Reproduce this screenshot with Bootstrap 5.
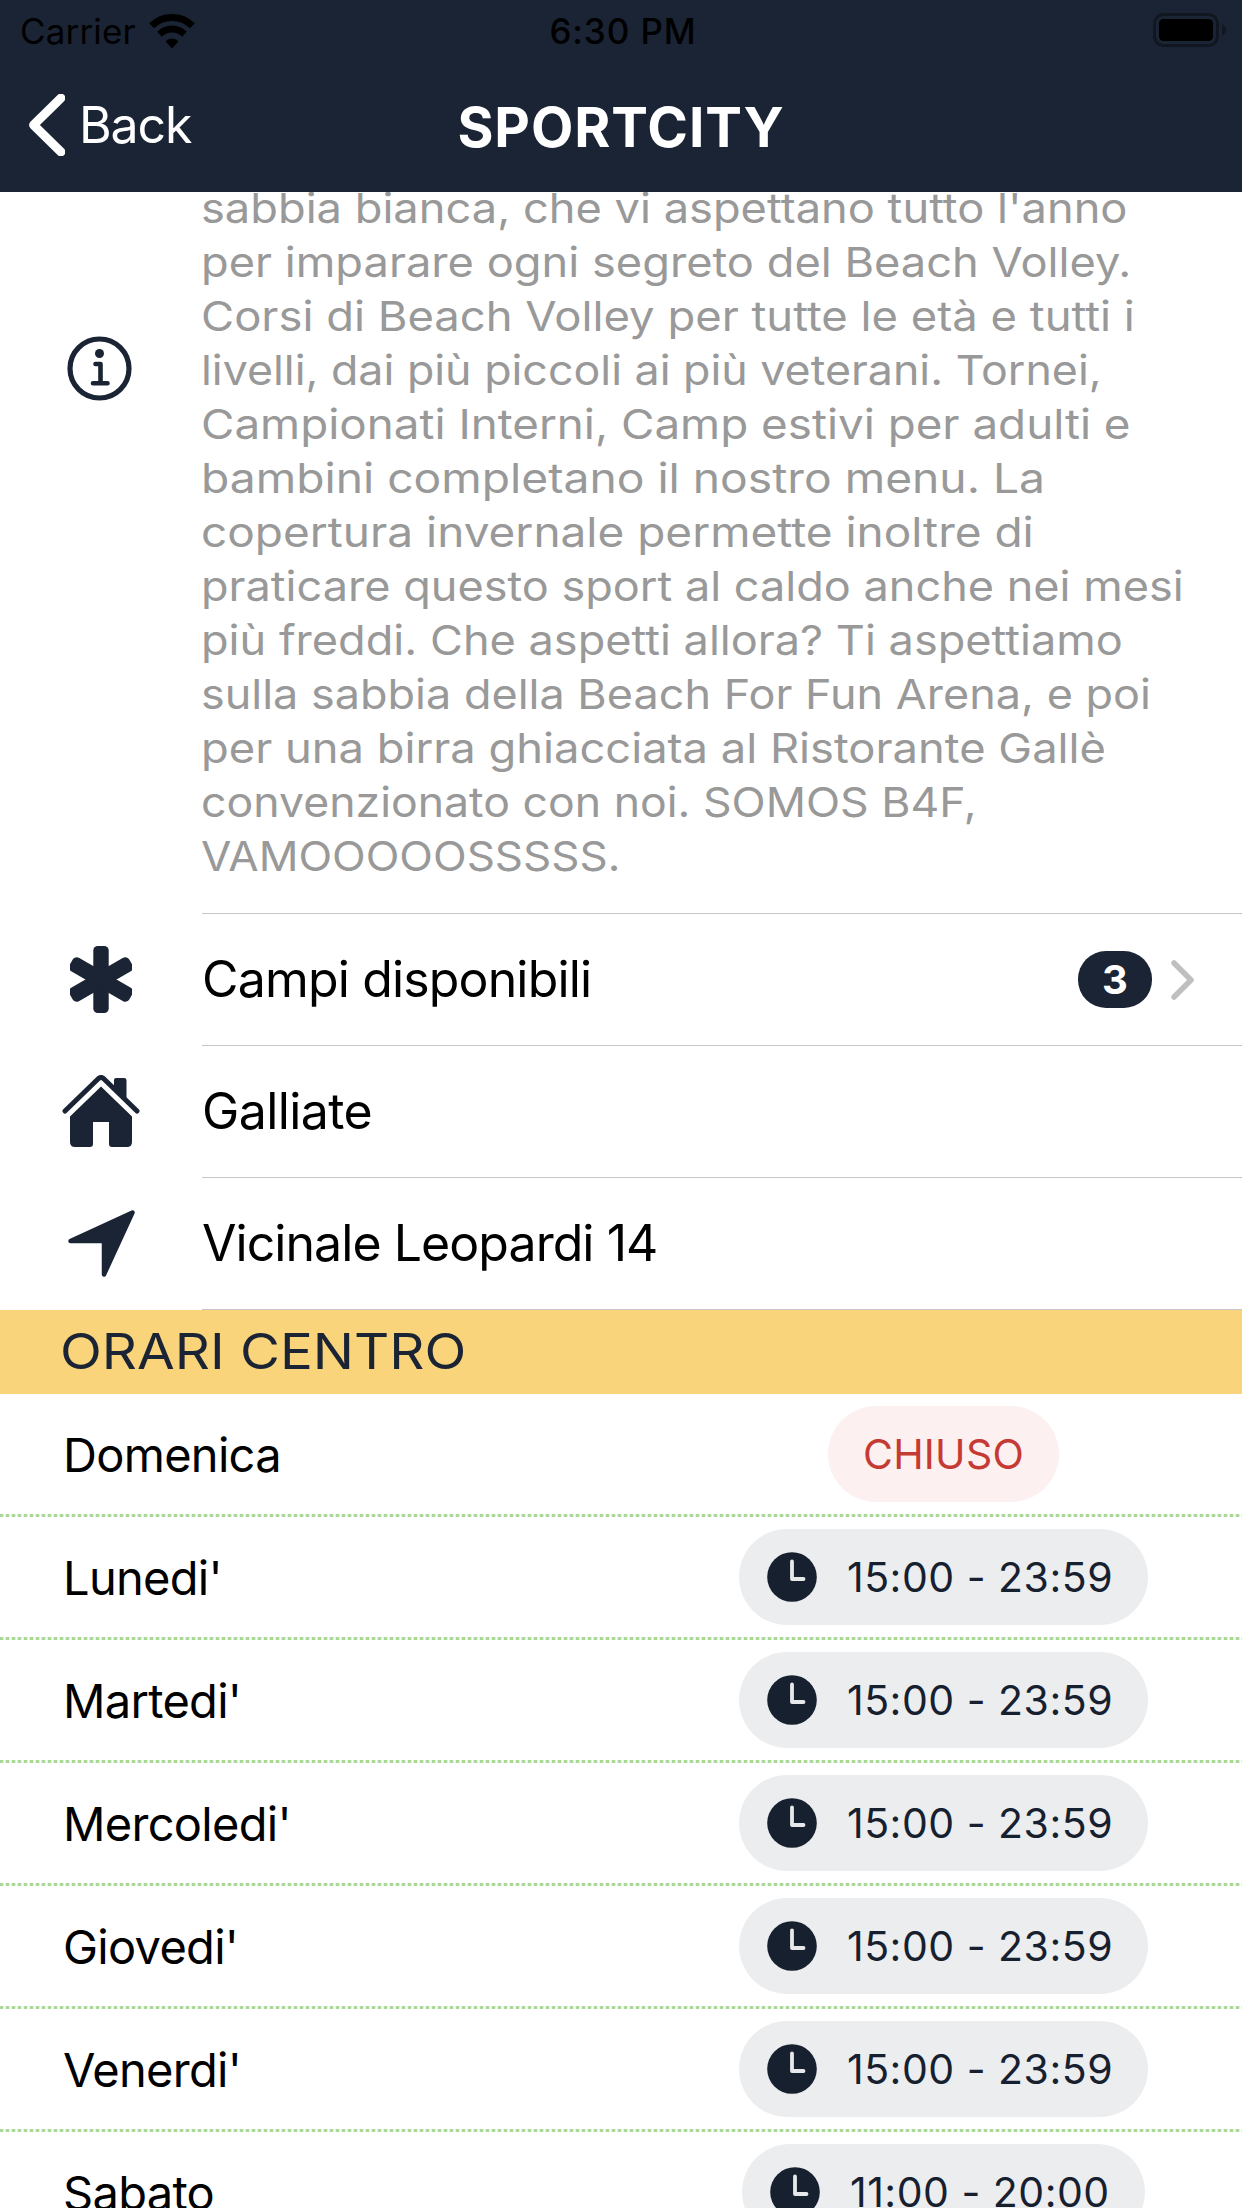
<!DOCTYPE html>
<html lang="it">
<head>
<meta charset="utf-8">
<meta name="viewport" content="width=device-width, initial-scale=1">
<title>SPORTCITY</title>
<link href="https://cdn.jsdelivr.net/npm/bootstrap@5.3.0/dist/css/bootstrap.min.css" rel="stylesheet">
<style>
:root { --ink: #1b2434; }
body { font-family: Inter, "Liberation Sans", sans-serif; color: #000; background: #fff; line-height: 1.2; }
.screen { width: 1242px; height: 2208px; }
.topbar { background: var(--ink); height: 192px; z-index: 2; }
.statusbar { height: 62px; font-size: 35px; padding: 0 16px 0 20px; color: #000; }
.carrier { width: 129px; letter-spacing: .16px; }
.clock-time { font-weight: 500; letter-spacing: .9px; }
.side { flex: 1 1 0; }
.titlebar { height: 130px; padding: 0 29px; }
.back-link { color: #fff; font-size: 50px; letter-spacing: -1.12px; gap: 14px; padding-bottom: 4px; }
.screen-title { font-size: 55px; font-weight: 700; letter-spacing: .95px; }
.icon-col { width: 202px; flex: none; color: var(--ink); }
.icon-col svg { display: block; }
.about { height: 722px; }
.about .icon-col { padding: 144px 0 0 67px; }
.about-text { margin-top: -11px; height: 733px; font-size: 41px; line-height: 54px; color: #999; border-bottom: 1px solid #c6c6c8; white-space: nowrap; }
/* Widened letterforms, one factor per line */
.about-text span { display: block; width: fit-content; margin-left: -1px; transform-origin: left; transform: scaleX(var(--k)); }
.info-row { height: 132px; font-size: 50px; }
.info-row .icon-col { padding-bottom: 2px; }
.info-body { border-bottom: 1px solid #c6c6c8; }
.row-label { padding-bottom: 2px; }
.count-pill { background: var(--ink); width: 74px; height: 57px; border-radius: 28px; font-size: 40px; font-weight: 700; margin-right: 19px; }
.section-band { background: #f9d47b; height: 84px; padding: 1px 0 0 60px; font-size: 49px; font-weight: 400; color: var(--ink); }
.section-band span { transform-origin: left; transform: scaleX(1.116); }
.day-row { height: 123px; padding-bottom: 3px; background: repeating-linear-gradient(90deg, #a9d897 0 3px, #e4f3de 3px 4px, #fff 4px 5px, #e4f3de 5px 6px) bottom left / 100% 3px no-repeat; }
.day-name { width: 645px; padding: 2px 0 0 63px; font-size: 47px; letter-spacing: -.7px; }
.hours { height: 96px; border-radius: 48px; font-size: 41px; color: #17202f; background: #ecedef; letter-spacing: .5px; width: 409px; padding-left: 28px; gap: 30px; }
.hours b { font-weight: 400; padding-top: 2px; }
.hours.late { width: 403px; }
.hours.closed { width: 231px; padding: 0; background: #fcf0f0; color: #c63a34; letter-spacing: .25px; }
</style>
</head>
<body>
<svg width="0" height="0" class="d-none">
  <symbol id="clock" viewBox="0 0 50 50"><circle cx="25" cy="25" r="24.8" fill="#17202f"/><path d="M25 9.5V27H36.5" fill="none" stroke="#e7e8ea" stroke-width="3.8" stroke-linecap="round" stroke-linejoin="round"/></symbol>
</svg>
<div class="screen d-flex flex-column overflow-hidden">
  <header class="topbar position-relative flex-shrink-0">
    <div class="statusbar d-flex align-items-center">
      <div class="side d-flex align-items-center">
        <span class="carrier">Carrier</span>
        <svg width="46" height="42" viewBox="0 0 46 42"><g fill="none" stroke="#000" stroke-width="7"><path d="M2.6 15.8A29 29 0 0 1 43.4 15.8"/><path d="M10.6 24.2A17.6 17.6 0 0 1 35.4 24.2"/></g><path d="M23 38.5L16.5 31.2A9.3 9.3 0 0 1 29.5 31.2Z"/></svg>
      </div>
      <span class="clock-time">6:30 PM</span>
      <div class="side d-flex justify-content-end">
        <svg width="73" height="36" viewBox="0 0 73 36"><rect x="1.5" y="1.5" width="63" height="31" rx="9" fill="none" stroke="#111721" stroke-width="3"/><rect x="6" y="6" width="54" height="22" rx="4.5"/><path d="M69 11Q73 13.500 73 17T69 23Z" fill="#111721"/></svg>
      </div>
    </div>
    <nav class="titlebar d-flex align-items-center">
      <div class="side"><a href="#" class="back-link d-inline-flex align-items-center text-decoration-none">
        <svg width="36" height="62" viewBox="0 0 36 62"><path d="M32 4L4.500 31L32 58" fill="none" stroke="#fff" stroke-width="8.800" stroke-linecap="round" stroke-linejoin="round"/></svg>Back</a></div>
      <h1 class="screen-title text-white m-0">SPORTCITY</h1>
      <div class="side"></div>
    </nav>
  </header>

  <main>
    <section class="about d-flex">
      <div class="icon-col"><svg width="65" height="65" viewBox="0 0 65 65" fill="none" stroke="currentColor"><circle cx="32.500" cy="32.500" r="29.500" stroke-width="5.200"/><circle cx="32.500" cy="17.500" r="4.500" fill="currentColor" stroke="none"/><path d="M28.500 28H33.500V47.200M26 47.200H40.500" stroke-width="4.600" stroke-linecap="round" stroke-linejoin="round"/></svg></div>
      <div class="about-text flex-fill">
        <span style="--k:1.103">sabbia bianca, che vi aspettano tutto l'anno</span>
        <span style="--k:1.103">per imparare ogni segreto del Beach Volley.</span>
        <span style="--k:1.107">Corsi di Beach Volley per tutte le età e tutti i</span>
        <span style="--k:1.091">livelli, dai più piccoli ai più veterani. Tornei,</span>
        <span style="--k:1.116">Campionati Interni, Camp estivi per adulti e</span>
        <span style="--k:1.127">bambini completano il nostro menu. La</span>
        <span style="--k:1.121">copertura invernale permette inoltre di</span>
        <span style="--k:1.099">praticare questo sport al caldo anche nei mesi</span>
        <span style="--k:1.1">più freddi. Che aspetti allora? Ti aspettiamo</span>
        <span style="--k:1.097">sulla sabbia della Beach For Fun Arena, e poi</span>
        <span style="--k:1.105">per una birra ghiacciata al Ristorante Gallè</span>
        <span style="--k:1.088">convenzionato con noi. SOMOS B4F,</span>
        <span style="--k:1.073">VAMOOOOOSSSSS.</span>
      </div>
    </section>

    <div class="info-row d-flex">
      <div class="icon-col d-flex align-items-center justify-content-center"><svg width="62" height="67" viewBox="0 0 62 67"><g fill="currentColor"><rect x="23.300" y="0" width="15.400" height="67" rx="4.500"/><rect x="23.300" y="-1" width="15.400" height="69" rx="4.500" transform="rotate(60 31 33.500)"/><rect x="23.300" y="-1" width="15.400" height="69" rx="4.500" transform="rotate(-60 31 33.500)"/></g></svg></div>
      <div class="info-body flex-fill d-flex align-items-center">
        <span class="row-label me-auto" style="letter-spacing:-.84px">Campi disponibili</span>
        <span class="count-pill text-white d-flex align-items-center justify-content-center">3</span>
        <svg width="71" height="40" viewBox="0 0 71 40"><path d="M3 3L20 20L3 37" fill="none" stroke="#bfbfbf" stroke-width="5.500" stroke-linecap="round" stroke-linejoin="round"/></svg>
      </div>
    </div>
    <div class="info-row d-flex">
      <div class="icon-col d-flex align-items-center justify-content-center"><svg width="78" height="72" viewBox="0 0 78 72"><path d="M39 11.500L70 41.500V67Q70 72 65 72H50Q47 72 47 69V47H31V69Q31 72 28 72H13Q8 72 8 67V41.500Z" fill="currentColor"/><path d="M52 14V5Q52 3 54 3H62Q64.500 3 64.500 5V27Z" fill="currentColor"/><path d="M3 36L36.500 3.500Q39 1.500 41.500 3.500L75 36" fill="none" stroke="currentColor" stroke-width="5" stroke-linecap="round" stroke-linejoin="round"/></svg></div>
      <div class="info-body flex-fill d-flex align-items-center"><span class="row-label" style="letter-spacing:-.6px">Galliate</span></div>
    </div>
    <div class="info-row d-flex">
      <div class="icon-col d-flex align-items-center justify-content-center"><svg width="67" height="67" viewBox="0 0 67 67"><path d="M64.500 2.500L36 64.500V31H2.500Z" fill="currentColor" stroke="currentColor" stroke-width="4.500" stroke-linejoin="round"/></svg></div>
      <div class="info-body flex-fill d-flex align-items-center"><span class="row-label" style="letter-spacing:-.94px">Vicinale Leopardi 14</span></div>
    </div>

    <h2 class="section-band d-flex align-items-center m-0"><span>ORARI CENTRO</span></h2>

    <div class="day-row d-flex align-items-center"><span class="day-name">Domenica</span><div class="flex-fill d-flex justify-content-center"><span class="hours closed d-flex align-items-center justify-content-center"><b>CHIUSO</b></span></div></div>
    <div class="day-row d-flex align-items-center"><span class="day-name">Lunedi'</span><div class="flex-fill d-flex justify-content-center"><span class="hours d-flex align-items-center"><svg width="50" height="50"><use href="#clock"/></svg><b>15:00 - 23:59</b></span></div></div>
    <div class="day-row d-flex align-items-center"><span class="day-name">Martedi'</span><div class="flex-fill d-flex justify-content-center"><span class="hours d-flex align-items-center"><svg width="50" height="50"><use href="#clock"/></svg><b>15:00 - 23:59</b></span></div></div>
    <div class="day-row d-flex align-items-center"><span class="day-name">Mercoledi'</span><div class="flex-fill d-flex justify-content-center"><span class="hours d-flex align-items-center"><svg width="50" height="50"><use href="#clock"/></svg><b>15:00 - 23:59</b></span></div></div>
    <div class="day-row d-flex align-items-center"><span class="day-name">Giovedi'</span><div class="flex-fill d-flex justify-content-center"><span class="hours d-flex align-items-center"><svg width="50" height="50"><use href="#clock"/></svg><b>15:00 - 23:59</b></span></div></div>
    <div class="day-row d-flex align-items-center"><span class="day-name">Venerdi'</span><div class="flex-fill d-flex justify-content-center"><span class="hours d-flex align-items-center"><svg width="50" height="50"><use href="#clock"/></svg><b>15:00 - 23:59</b></span></div></div>
    <div class="day-row d-flex align-items-center"><span class="day-name">Sabato</span><div class="flex-fill d-flex justify-content-center"><span class="hours late d-flex align-items-center"><svg width="50" height="50"><use href="#clock"/></svg><b>11:00 - 20:00</b></span></div></div>
  </main>
</div>
<script src="https://cdn.jsdelivr.net/npm/bootstrap@5.3.0/dist/js/bootstrap.bundle.min.js"></script>
</body>
</html>
